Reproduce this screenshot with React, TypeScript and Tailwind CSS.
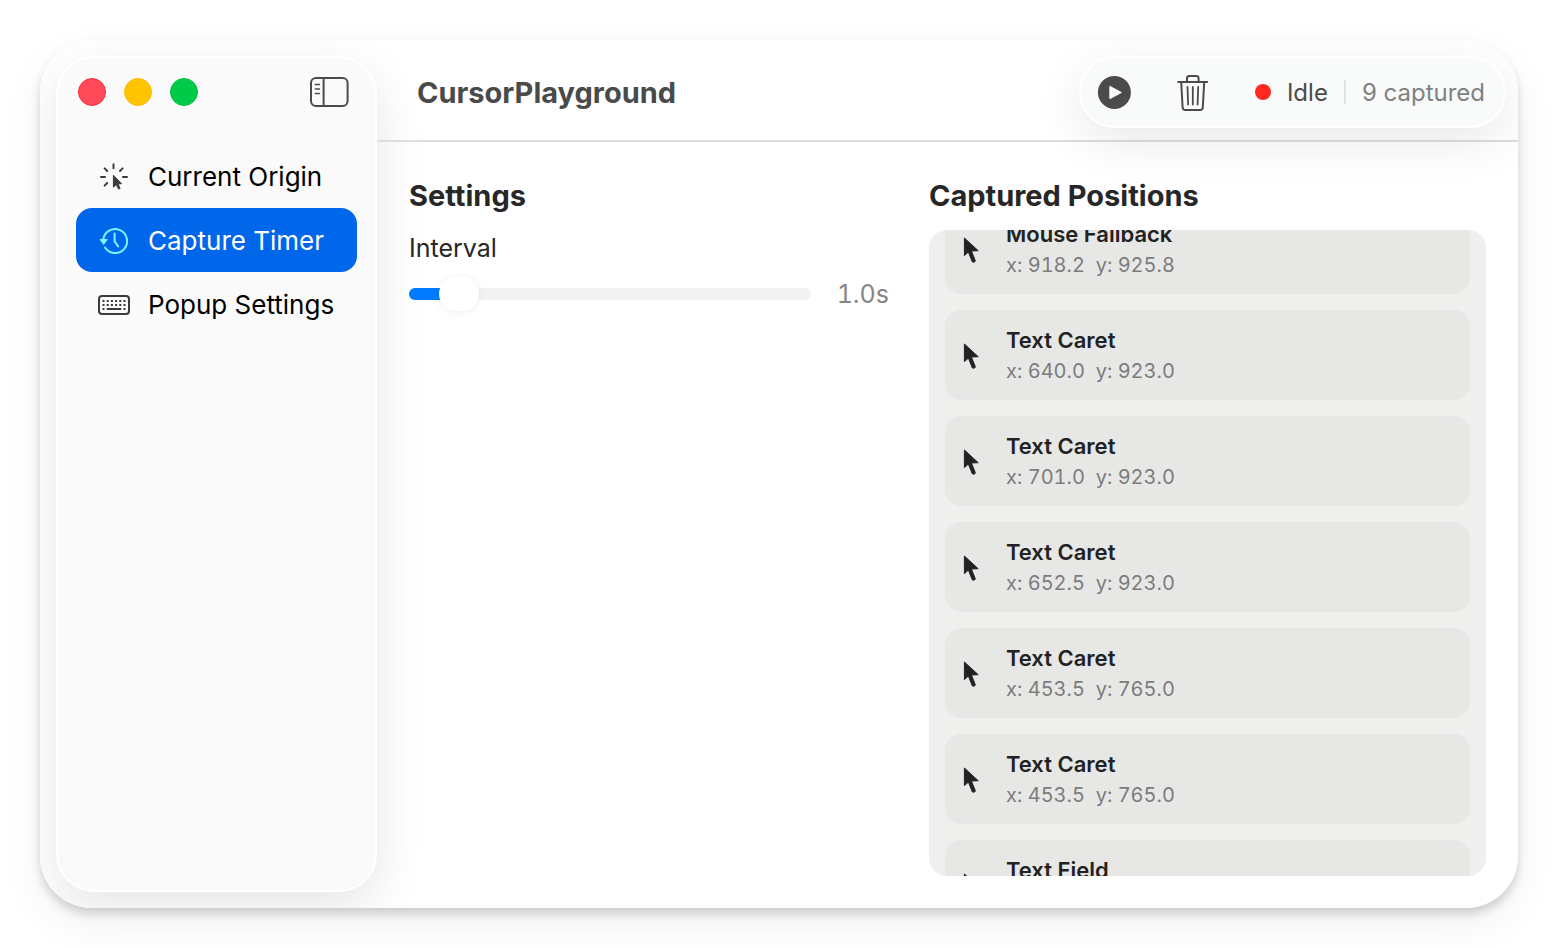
import { useLayoutEffect, useRef, useState } from "react";
import type { CSSProperties, ReactNode } from "react";
import clsx from "clsx";

type Position = { id: number; source: string; x: string; y: string };

const POSITIONS: Position[] = [
  { id: 1, source: "Mouse Fallback", x: "918.2", y: "925.8" },
  { id: 2, source: "Text Caret", x: "640.0", y: "923.0" },
  { id: 3, source: "Text Caret", x: "701.0", y: "923.0" },
  { id: 4, source: "Text Caret", x: "652.5", y: "923.0" },
  { id: 5, source: "Text Caret", x: "453.5", y: "765.0" },
  { id: 6, source: "Text Caret", x: "453.5", y: "765.0" },
  { id: 7, source: "Text Field", x: "453.5", y: "765.0" },
];

const MIN_INTERVAL = 0.2;
const MAX_INTERVAL = 10;

function SidebarIcon() {
  return (
    <svg viewBox="0 0 40 32" className="h-8 w-10" fill="none" stroke="#4a4a4a" strokeLinecap="round">
      <rect x="2" y="2" width="36.6" height="28" rx="5" strokeWidth="2" />
      <path d="M14.6 2v28" strokeWidth="2" strokeLinecap="butt" />
      <path d="M6.4 8.5h4M6.4 13h4M6.4 17.5h4" strokeWidth="1.6" />
    </svg>
  );
}

function CursorRaysIcon() {
  return (
    <svg viewBox="0 0 32 32" className="size-8" fill="none" stroke="#3c3a3c" strokeWidth="2" strokeLinecap="round">
      <path d="M15.5 4.2v4M24.6 8.4 22 11M6.6 8.4 9.2 11M3 17h4M25 17h4M9.2 23l-2.6 2.6" />
      <path
        d="M15.4 15.6v11.6l2.9-2.6 2.3 4.5 1.5-.7-2.1-4.5 3.2-.2z"
        fill="#3c3a3c"
        strokeWidth="1"
        strokeLinejoin="round"
      />
    </svg>
  );
}

function ClockArrowIcon() {
  return (
    <svg viewBox="0 0 32 32" className="size-8" fill="none" stroke="#7df4ff" strokeWidth="2" strokeLinecap="round" strokeLinejoin="round">
      <path d="M5.2 15.600A12 12 0 1 1 7 23.5" />
      <path d="M16.600 9.600v7.800l3.600 5" />
      <path d="M2.400 15.600H9L5.600 20.200z" fill="#7df4ff" strokeWidth="1.2" />
    </svg>
  );
}

function KeyboardIcon() {
  const columns = [5.5, 9.7, 13.9, 18.1, 22.3, 26.5];
  return (
    <svg viewBox="0 0 32 32" className="size-8" fill="#3c3a3c">
      <rect x="1" y="8" width="30" height="18" rx="3" fill="none" stroke="#3c3a3c" strokeWidth="2" />
      {columns.map((x) => (
        <g key={x}>
          <rect x={x - 1} y="12" width="2" height="2" />
          <rect x={x - 1} y="16" width="2" height="2" />
        </g>
      ))}
      <rect x="4.5" y="20" width="2" height="2" />
      <rect x="8.7" y="20" width="14.6" height="2" rx=".6" />
      <rect x="25.5" y="20" width="2" height="2" />
    </svg>
  );
}

function PlayIcon() {
  return (
    <svg viewBox="0 0 34 34" className="size-[34px]">
      <circle cx="17.4" cy="17.4" r="16.5" fill="#4a4b4a" />
      <path d="M13 11.7v11.6l11-5.800z" fill="#f9fbfa" stroke="#f9fbfa" strokeWidth="1.4" strokeLinejoin="round" />
    </svg>
  );
}

function TrashIcon() {
  return (
    <svg viewBox="0 0 32 38" className="h-[38px] w-8" fill="none" stroke="#4a4b4a" strokeWidth="2" strokeLinecap="round" strokeLinejoin="round">
      <path d="M1.2 9h29" />
      <path d="M10 9V5.4C10 3.800 11 3 12.6 3h6.4c1.6 0 2.6.8 2.6 2.4V9" />
      <path d="M4.200 9 5.6 34.2C5.7 36 6.7 37 8.500 37h14.400c1.800 0 2.800-1 2.900-2.800L27.200 9" />
      <path d="M10.500 14l.6 17.500M15.800 14v17.500M21.200 14l-.6 17.500" strokeWidth="1.8" />
    </svg>
  );
}

function PointerIcon() {
  return (
    <svg viewBox="0 0 20 30" className="h-[30px] w-5 shrink-0" fill="#222" stroke="#222" strokeWidth="1" strokeLinejoin="round">
      <path d="M3.4 3v17.600l4-3.500 3.800 9.500c.3.700.8.900 1.400.7l1.100-.5c.6-.3.700-.8.500-1.400L10.400 16l6.800-.3z" />
    </svg>
  );
}

function NavItem({ icon, label, selected, onSelect }: { icon: ReactNode; label: string; selected: boolean; onSelect: () => void }) {
  return (
    <li>
      <button
        type="button"
        onClick={onSelect}
        aria-current={selected ? "page" : undefined}
        className={clsx(
          "flex h-16 w-full items-center gap-[18px] rounded-2xl px-[22px] text-left text-[26px]",
          selected ? "bg-[#0066ea] text-white" : "text-black",
        )}
      >
        {icon}
        <span className="whitespace-nowrap">{label}</span>
      </button>
    </li>
  );
}

function Sidebar() {
  const [selected, setSelected] = useState("Capture Timer");
  const items = [
    { label: "Current Origin", icon: <CursorRaysIcon /> },
    { label: "Capture Timer", icon: <ClockArrowIcon /> },
    { label: "Popup Settings", icon: <KeyboardIcon /> },
  ];
  return (
    <aside className="my-4 ml-4 w-[321px] shrink-0 rounded-[38px] border-2 border-white bg-[#fafafa] px-[18px] pt-5 shadow-[0_16px_50px_rgba(0,0,0,0.10)]">
      <div className="mb-[38px] flex h-7 items-center justify-between pr-2 pl-0.5">
        <div className="flex gap-[18px]">
          <button type="button" aria-label="Close" className="size-7 rounded-full border border-[#ff2d3c] bg-[#ff4958]" />
          <button type="button" aria-label="Minimize" className="size-7 rounded-full border border-[#fbbc00] bg-[#ffc400]" />
          <button type="button" aria-label="Zoom" className="size-7 rounded-full border border-[#00bf3c] bg-[#00ca48]" />
        </div>
        <button type="button" aria-label="Toggle sidebar">
          <SidebarIcon />
        </button>
      </div>
      <nav>
        <ul>
          {items.map((item) => (
            <NavItem
              key={item.label}
              icon={item.icon}
              label={item.label}
              selected={item.label === selected}
              onSelect={() => setSelected(item.label)}
            />
          ))}
        </ul>
      </nav>
    </aside>
  );
}

function Toolbar() {
  return (
    <header className="flex items-center justify-between border-b-2 border-[#dedede] pt-4 pr-3 pb-3 pl-10">
      <h1 className="pt-0.5 text-[29px] font-bold text-[#4a4a4a]">CursorPlayground</h1>
      <div className="flex h-[72px] items-center rounded-full border-2 border-white bg-[#f9fbfa] pr-[19px] pl-4 text-2xl whitespace-nowrap shadow-[0_14px_50px_rgba(0,0,0,0.09)]">
        <button type="button" aria-label="Start capture">
          <PlayIcon />
        </button>
        <button type="button" aria-label="Clear captures" className="ml-[46px]">
          <TrashIcon />
        </button>
        <span className="ml-[46px] size-4 rounded-full bg-[#ff2720]" />
        <span className="ml-4 pt-0.5 text-[#4a4b4a]">Idle</span>
        <span className="mx-4 h-6 w-0.5 bg-[#e0e2e1]" />
        <span className="pt-0.5 text-[#808180]">9 captured</span>
      </div>
    </header>
  );
}

function SettingsPane() {
  const [interval, setInterval] = useState(1);
  const ratio = (interval - MIN_INTERVAL) / (MAX_INTERVAL - MIN_INTERVAL);
  const fill: CSSProperties = { backgroundSize: `calc(20px + (100% - 40px) * ${ratio}) 100%` };
  return (
    <section className="min-w-0">
      <h2 className="mb-3.5 pt-0.5 text-[29px] leading-10 font-bold text-[#272727]">Settings</h2>
      <label htmlFor="interval" className="block pt-0.5 text-[25px] leading-8 text-[#272727]">
        Interval
      </label>
      <div className="mt-3.5 flex h-8 items-center gap-[26px]">
        <input
          id="interval"
          type="range"
          min={MIN_INTERVAL}
          max={MAX_INTERVAL}
          step={0.1}
          value={interval}
          onChange={(event) => setInterval(Number(event.target.value))}
          style={fill}
          className="h-3 min-w-0 flex-1 appearance-none rounded-full bg-[#f2f2f2] bg-linear-to-r from-[#007aff] to-[#007aff] bg-no-repeat [&::-webkit-slider-thumb]:h-[34px] [&::-webkit-slider-thumb]:w-10 [&::-webkit-slider-thumb]:appearance-none [&::-webkit-slider-thumb]:rounded-full [&::-webkit-slider-thumb]:bg-white [&::-webkit-slider-thumb]:shadow-[0_1px_8px_rgba(0,0,0,0.07)]"
        />
        <output htmlFor="interval" className="pt-0.5 text-[25px] text-[#858585] tabular-nums">
          {interval.toFixed(1)}s
        </output>
      </div>
    </section>
  );
}

function CapturedPane() {
  const listRef = useRef<HTMLUListElement>(null);

  useLayoutEffect(() => {
    if (listRef.current) listRef.current.scrollTop = 42;
  }, []);

  return (
    <section className="flex min-h-0 min-w-0 flex-col">
      <h2 className="mb-3.5 pt-0.5 text-[29px] leading-10 font-bold whitespace-nowrap text-[#272727]">Captured Positions</h2>
      <ul ref={listRef} className="flex min-h-0 flex-1 flex-col gap-4 overflow-y-auto rounded-[18px] bg-[#efefee] p-4 [scrollbar-width:none]">
        {POSITIONS.map((position) => (
          <li key={position.id} className="flex shrink-0 items-center gap-[25px] rounded-2xl bg-[#e7e7e6] px-4 pt-[15px] pb-[13px]">
            <PointerIcon />
            <div>
              <p className="text-[22px] leading-[30px] font-semibold text-[#222]">{position.source}</p>
              <p className="text-[20px] leading-8 whitespace-pre text-[#7c7c7c] tabular-nums">{`x: ${position.x}  y: ${position.y}`}</p>
            </div>
          </li>
        ))}
      </ul>
    </section>
  );
}

export default function App() {
  return (
    <div className="h-screen bg-white p-10 font-['Inter',sans-serif]">
      <div className="h-full rounded-[52px] shadow-[0_6px_10px_rgba(0,0,0,0.16),0_16px_44px_rgba(0,0,0,0.06)]">
        <div className="flex h-full overflow-hidden rounded-[52px] bg-white">
          <Sidebar />
          <main className="flex min-w-0 flex-1 flex-col">
            <Toolbar />
            <div className="grid min-h-0 flex-1 grid-cols-[minmax(0,480fr)_minmax(0,557fr)] gap-10 p-8">
              <SettingsPane />
              <CapturedPane />
            </div>
          </main>
        </div>
      </div>
    </div>
  );
}
